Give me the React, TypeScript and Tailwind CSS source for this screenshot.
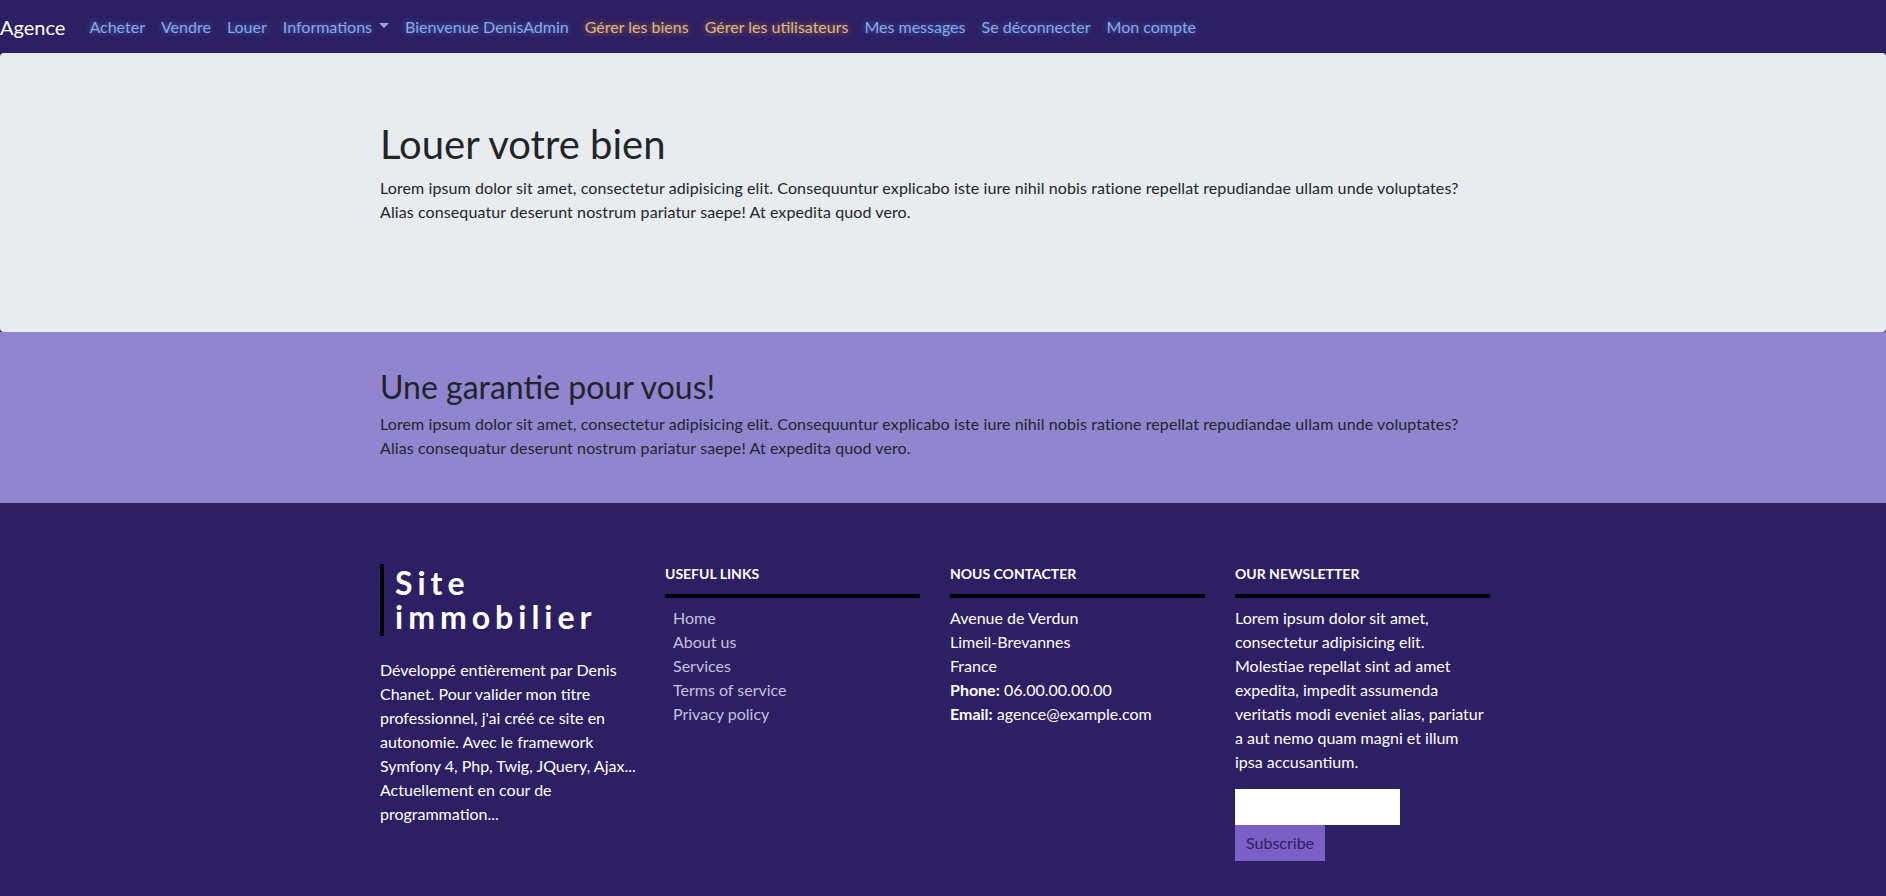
import { ChevronDown } from 'lucide-react'

const font = { fontFamily: 'Lato, "Noto Sans", sans-serif' }

const navLinks = [
  { title: 'Acheter', admin: false },
  { title: 'Vendre', admin: false },
  { title: 'Louer', admin: false },
  { title: 'Informations', admin: false, dropdown: true },
  { title: 'Bienvenue DenisAdmin', admin: false },
  { title: 'Gérer les biens', admin: true },
  { title: 'Gérer les utilisateurs', admin: true },
  { title: 'Mes messages', admin: false },
  { title: 'Se déconnecter', admin: false },
  { title: 'Mon compte', admin: false },
]

const usefulLinks = ['Home', 'About us', 'Services', 'Terms of service', 'Privacy policy']

const lorem =
  'Lorem ipsum dolor sit amet, consectetur adipisicing elit. Consequuntur explicabo iste iure nihil nobis ratione repellat repudiandae ullam unde voluptates? Alias consequatur deserunt nostrum pariatur saepe! At expedita quod vero.'

const Navbar = () => (
  <nav className="h-[53px] bg-[#2c1f63] flex items-center">
    <a className="text-white text-[20px] mr-4 leading-[30px]">Agence</a>
    <ul className="flex items-center">
      {navLinks.map((l) => (
        <li key={l.title}>
          <a
            className={
              l.admin
                ? 'flex items-center px-2 text-[16px] text-[#d8b98c] [text-shadow:0_0_6px_#c7772b]'
                : 'flex items-center px-2 text-[16px] text-[#8fa9d8] [text-shadow:0_0_6px_#3d6fd6]'
            }
          >
            {l.title}
            {l.dropdown && (
              <svg width="10" height="6" viewBox="0 0 10 6" className="ml-[7px] mt-[-2px]">
                <path d="M0 0h10L5 5z" fill="#8fa9d8" />
              </svg>
            )}
          </a>
        </li>
      ))}
    </ul>
  </nav>
)

const FooterTitle = ({ children }: { children: string }) => (
  <div>
    <h4 className="text-white text-[14px] font-bold uppercase leading-[20px]">{children}</h4>
    <div className="h-[4px] bg-black mt-[10px] mb-[8px]" />
  </div>
)

export default function App() {
  return (
    <div style={font} className="min-h-screen bg-[#2c1f63] text-[#212529]">
      <Navbar />

      <div className="bg-[#e9ecef] rounded-[4px] h-[279px] pt-[67px]">
        <div className="w-[1140px] ml-[380px]">
          <h1 className="text-[40px] leading-[48px] mb-2 font-normal">Louer votre bien</h1>
          <p className="text-[16px] leading-6 w-[1100px] tracking-[0.1px]">{lorem}</p>
        </div>
      </div>

      <div className="bg-[#9185cf] h-[171px] pt-[36px]">
        <div className="w-[1140px] ml-[380px]">
          <h2 className="text-[32px] leading-[38px] mb-[6px] font-normal">Une garantie pour vous!</h2>
          <p className="text-[16px] leading-6 w-[1100px] tracking-[0.1px]">{lorem}</p>
        </div>
      </div>

      <footer className="bg-[#2c1f63] pt-[61px] pb-[35px]">
        <div className="ml-[365px] w-[1140px] grid grid-cols-4">
          <div className="px-[15px]">
            <div className="border-l-4 border-black pl-[11px] py-[2px]">
              <h3 className="text-white text-[32px] font-bold leading-[34px] tracking-[5px]">
                Site immobilier
              </h3>
            </div>
            <p className="text-white text-[16px] leading-6 mt-[22px] mr-[-10px]">
              Développé entièrement par Denis Chanet. Pour valider mon titre professionnel, j'ai créé ce site en
              autonomie. Avec le framework Symfony 4, Php, Twig, JQuery, Ajax... Actuellement en cour de
              programmation...
            </p>
          </div>

          <div className="px-[15px]">
            <FooterTitle>Useful links</FooterTitle>
            <ul className="pl-2">
              {usefulLinks.map((l) => (
                <li key={l} className="text-[16px] leading-6 text-[#c5c1dc]">
                  {l}
                </li>
              ))}
            </ul>
          </div>

          <div className="px-[15px]">
            <FooterTitle>Nous contacter</FooterTitle>
            <p className="text-white text-[16px] leading-6">
              Avenue de Verdun
              <br />
              Limeil-Brevannes
              <br />
              France
              <br />
              <strong>Phone:</strong> 06.00.00.00.00
              <br />
              <strong>Email:</strong> agence@example.com
            </p>
          </div>

          <div className="px-[15px]">
            <FooterTitle>Our newsletter</FooterTitle>
            <p className="text-white text-[16px] leading-6">
              Lorem ipsum dolor sit amet, consectetur adipisicing elit. Molestiae repellat sint ad amet expedita,
              impedit assumenda veritatis modi eveniet alias, pariatur a aut nemo quam magni et illum ipsa
              accusantium.
            </p>
            <form className="mt-[15px]">
              <input type="email" className="block w-[165px] h-[36px] bg-white outline-none" />
              <button type="button" className="block h-[36px] px-[11px] bg-[#7b5fc4] text-[#2c1f63] text-[16px]">
                Subscribe
              </button>
            </form>
          </div>
        </div>
      </footer>
    </div>
  )
}
